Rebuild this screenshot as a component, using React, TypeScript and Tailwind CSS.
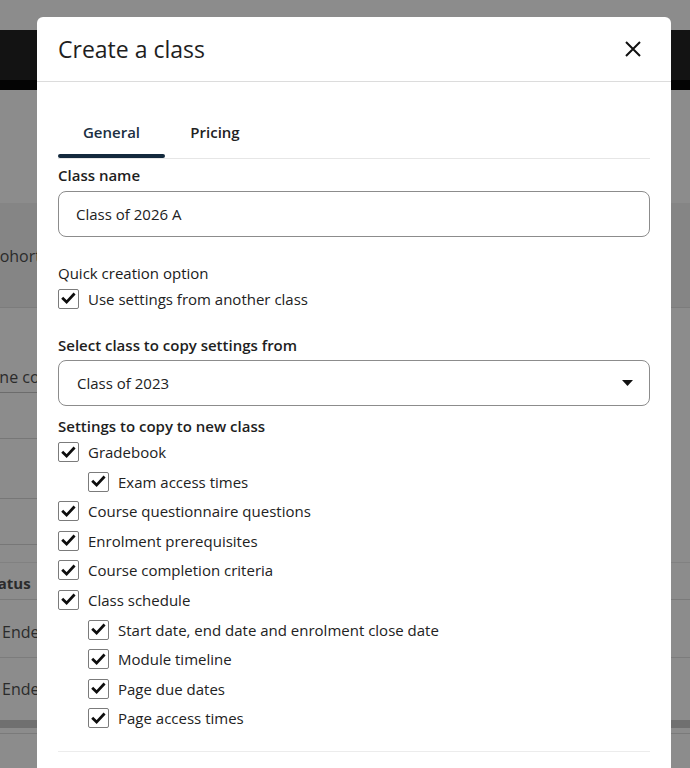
import React from 'react';

type Option = { label: string; nested?: boolean };

const copyOptions: Option[] = [
  { label: 'Gradebook' },
  { label: 'Exam access times', nested: true },
  { label: 'Course questionnaire questions' },
  { label: 'Enrolment prerequisites' },
  { label: 'Course completion criteria' },
  { label: 'Class schedule' },
  { label: 'Start date, end date and enrolment close date', nested: true },
  { label: 'Module timeline', nested: true },
  { label: 'Page due dates', nested: true },
  { label: 'Page access times', nested: true },
];

const CheckBox: React.FC = () => (
  <span className="flex h-[20px] w-[21px] shrink-0 items-center justify-center rounded-[2px] border border-[#7b7b7b] bg-white">
    <svg width="15" height="15" viewBox="0 0 15 15" fill="none">
      <path d="M2.2 7.8 5.6 11.1 12.6 3.6" stroke="#0d0d0d" strokeWidth="2.8" strokeLinecap="square" />
    </svg>
  </span>
);

const CheckRow: React.FC<{ label: string; nested?: boolean }> = ({ label, nested }) => (
  <label className={`flex h-[20px] items-center gap-[9px] ${nested ? 'pl-[30px]' : ''}`}>
    <CheckBox />
    <span className="text-[15px] leading-[20px] text-[#222]">{label}</span>
  </label>
);

// page behind the dialog, dimmed by the overlay
const Backdrop: React.FC = () => (
  <div className="flex flex-col text-[15px] text-[#2b2b2b]">
    <div className="h-[30px] bg-[#8c8c8c]" />
    <div className="h-[50px] bg-[#131313]" />
    <div className="h-[10px] bg-[#040404]" />
    <div className="h-[113px] bg-[#8c8c8c]" />
    <div className="flex h-[105px] items-center border-b border-[#7c7c7c] bg-[#858585]">
      <span className="-ml-[8px] pt-[2px] text-[16px]">cohort</span>
    </div>
    <div className="flex h-[85px] items-end bg-[#8c8c8c]">
      <div className="w-[420px] border-b border-[#6c6c6c] pb-[3px]">
        <span className="-ml-[31px] inline-block text-[16px]">Online course</span>
      </div>
    </div>
    <div className="h-[46px] w-[420px] border-b border-[#777]" />
    <div className="h-[60px] w-[420px] border-b border-[#777]" />
    <div className="h-[46px] w-[420px] border-b border-[#777]" />
    <div className="h-[18px] border-b border-[#818181]" />
    <div className="flex h-[37px] items-center border-b border-[#7a7a7a] pt-[4px]">
      <span className="-ml-[17px] font-bold">Status</span>
    </div>
    <div className="flex h-[58px] items-center border-b border-[#7c7c7c] pt-[6px]">
      <span className="pl-[2px] text-[16px]">Ended</span>
    </div>
    <div className="flex h-[62px] items-center pb-[1px]">
      <span className="pl-[2px] text-[16px]">Ended</span>
    </div>
    <div className="h-[8px] bg-[#707070]" />
    <div className="h-[6px] border-b border-[#7a7a7a]" />
    <div className="h-[40px]" />
  </div>
);

export default function App() {
  return (
    <div className="relative h-screen overflow-hidden bg-[#8c8c8c] font-['Open_Sans',sans-serif]">
      <Backdrop />

      <div className="absolute left-[37px] top-[17px] w-[634px] rounded-t-[6px] bg-white pb-[40px]">
        <div className="flex h-[65px] items-center justify-between border-b border-[#dcdcdc] pl-[21px] pr-[28px]">
          <h2 className="text-[23px] leading-[30px] text-[#1e1e1e]">Create a class</h2>
          <button className="flex h-[20px] w-[20px] items-center justify-center">
            <svg width="16" height="16" viewBox="0 0 16 16" fill="none">
              <path d="M1 1 15 15M15 1 1 15" stroke="#111" strokeWidth="2" />
            </svg>
          </button>
        </div>

        <div className="px-[21px]">
          <div className="mt-[23px] flex border-b border-[#e6e6e6]">
            <button className="flex w-[107px] flex-col items-center pt-[17px]">
              <span className="text-[15px] font-semibold leading-[20px] text-[#1b2f42]">General</span>
              <span className="mt-[12px] h-[4px] w-full rounded-full bg-[#13293d]" />
            </button>
            <button className="flex w-[100px] flex-col items-center pt-[17px]">
              <span className="text-[15px] font-semibold leading-[20px] text-[#222]">Pricing</span>
              <span className="mt-[12px] h-[4px] w-full" />
            </button>
          </div>

          <div className="mt-[5px] text-[15px] font-semibold leading-[22px] text-[#1e1e1e]">Class name</div>
          <div className="mt-[5px] flex h-[46px] items-center rounded-[8px] border border-[#8c8c8c] px-[17px] text-[15px] text-[#222]">
            Class of 2026 A
          </div>

          <div className="mt-[25px] text-[15px] leading-[22px] text-[#1a1a1a]">Quick creation option</div>
          <div className="mt-[4px] flex h-[21px] items-center">
            <CheckRow label="Use settings from another class" />
          </div>

          <div className="mt-[25px] text-[15px] font-semibold leading-[22px] text-[#1e1e1e]">
            Select class to copy settings from
          </div>
          <div className="mt-[4px] flex h-[46px] items-center justify-between rounded-[8px] border border-[#8c8c8c] pl-[18px] pr-[16px] text-[15px] text-[#222]">
            <span>Class of 2023</span>
            <svg width="11" height="6" viewBox="0 0 11 6">
              <path d="M0 0h11L5.5 6z" fill="#111" />
            </svg>
          </div>

          <div className="mt-[9px] text-[15px] font-semibold leading-[22px] text-[#1e1e1e]">
            Settings to copy to new class
          </div>
          <div className="mt-[5px] flex flex-col gap-[9.6px]">
            {copyOptions.map((o) => (
              <CheckRow key={o.label} label={o.label} nested={o.nested} />
            ))}
          </div>

          <div className="mt-[23px] border-b border-[#ececec]" />
        </div>
      </div>
    </div>
  );
}
